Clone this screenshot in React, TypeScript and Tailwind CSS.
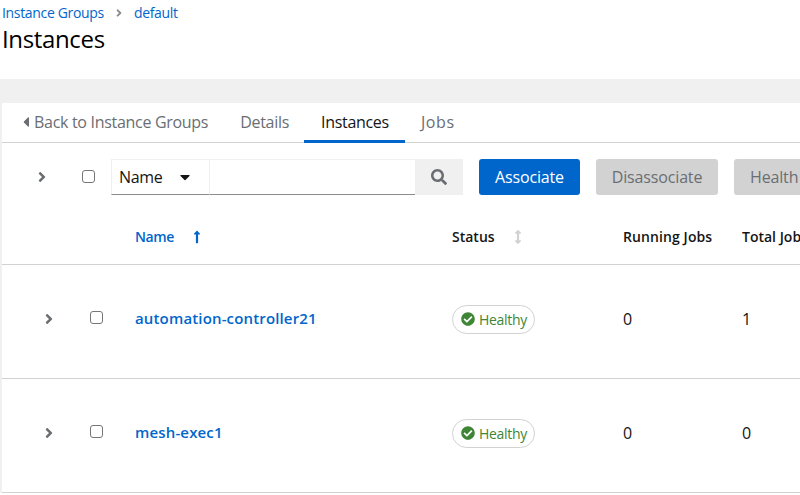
import React from 'react';
import {
  FaAngleRight,
  FaArrowsAltV,
  FaCaretDown,
  FaCaretLeft,
  FaCheckCircle,
  FaLongArrowAltUp,
  FaSearch,
} from 'react-icons/fa';

const FONT = "font-['Open_Sans',sans-serif]";

const Checkbox: React.FC = () => (
  <span className="block w-[13px] h-[13px] rounded-[3px] border border-[#767676] bg-white" />
);

interface RowProps {
  name: string;
  running: number;
  total: number;
}

const Row: React.FC<RowProps> = ({ name, running, total }) => (
  <div className="flex items-center h-[114px] pb-[6px] border-b border-[#d2d2d2]">
    <div className="w-[88px] pl-[42px] shrink-0">
      <FaAngleRight className="w-[10px] h-4 text-[#6a6e73]" />
    </div>
    <div className="w-[45px] shrink-0 -translate-y-px">
      <Checkbox />
    </div>
    <a className="w-[317px] shrink-0 text-[15px] font-semibold text-[#0066cc] tracking-[0.15px]">{name}</a>
    <div className="w-[171px] shrink-0 translate-y-px">
      <span className="inline-flex items-center gap-[4px] h-[29px] w-[83px] pl-2 pb-px rounded-full border border-[#d2d2d2] text-[14px] tracking-[-0.3px] text-[#3e8635]">
        <FaCheckCircle className="w-[14px] h-[14px] text-[#3e8635]" />
        Healthy
      </span>
    </div>
    <div className="w-[119px] shrink-0 text-[16px] text-[#151515]">{running}</div>
    <div className="text-[16px] text-[#151515]">{total}</div>
  </div>
);

export default function App() {
  return (
    <div className={`w-[800px] h-[495px] overflow-hidden bg-white ${FONT} text-[#151515]`}>
      <header className="h-[79px] pl-[2px]">
        <nav className="flex items-center h-[25px] text-[14px] tracking-[-0.33px] text-[#0066cc]">
          <a>Instance Groups</a>
          <FaAngleRight className="w-[8px] h-3 mx-[11px] text-[#8a8d90]" />
          <a>default</a>
        </nav>
        <h1 className="text-[24px] leading-[28px] tracking-[-0.35px] text-black">Instances</h1>
      </header>

      <div className="h-6 bg-[#f0f0f0]" />

      <main className="border-l-2 border-[#f0f0f0]">
        <div className="flex h-10 border-b border-[#d2d2d2] text-[16px] tracking-[-0.3px] text-[#6a6e73]">
          <a className="flex items-center pl-[20px] pr-4 pb-[2px] h-full">
            <FaCaretLeft className="w-[8px] h-4 mr-[4px] text-[#6a6e73]" />
            Back to Instance Groups
          </a>
          <a className="flex items-center px-4 pb-[2px] h-full">Details</a>
          <a className="flex items-center pl-[17px] pr-4 h-[40px] -ml-px border-b-[3px] border-[#0066cc] text-[#151515] pt-px">
            Instances
          </a>
          <a className="flex items-center px-4 pb-[2px] h-full tracking-[0.6px]">Jobs</a>
        </div>

        <div className="flex items-center h-[68px] pb-px">
          <div className="w-[80px] pl-[35px] shrink-0">
            <FaAngleRight className="w-[10px] h-4 text-[#6a6e73]" />
          </div>
          <div className="w-[29px] shrink-0">
            <Checkbox />
          </div>
          <div className="flex h-9 w-[352px] shrink-0 text-[16px]">
            <div className="flex items-center justify-between w-[99px] pl-[7px] pr-[19px] tracking-[-0.3px] border-t border-l border-r border-b border-t-[#f0f0f0] border-l-[#f0f0f0] border-r-[#f0f0f0] border-b-[#8a8d90]">
              Name
              <FaCaretDown className="w-[10px] h-4 text-[#151515]" />
            </div>
            <div className="w-[206px] border-t border-b border-t-[#f0f0f0] border-b-[#8a8d90]" />
            <div className="flex items-center justify-center w-[48px] bg-[#f0f0f0]">
              <FaSearch className="w-4 h-4 text-[#6a6e73]" />
            </div>
          </div>
          <div className="flex gap-4 text-[16px] tracking-[-0.15px] ml-[16px]">
            <button className="w-[101px] h-9 rounded-[3px] bg-[#0066cc] text-white">Associate</button>
            <button className="w-[122px] h-9 rounded-[3px] bg-[#d2d2d2] text-[#6a6e73]">Disassociate</button>
            <button className="w-[120px] h-9 rounded-[3px] bg-[#d2d2d2] text-[#6a6e73] text-left pl-4 whitespace-nowrap">Health Check</button>
          </div>
        </div>

        <div className="flex items-center h-[54px] pb-[2px] border-b border-[#d2d2d2] text-[14px] font-semibold">
          <div className="w-[133px] shrink-0" />
          <div className="flex items-center w-[317px] shrink-0 text-[#0066cc] tracking-[-0.4px]">
            Name
            <FaLongArrowAltUp className="w-[8px] h-[14px] ml-[19px]" />
          </div>
          <div className="flex items-center w-[171px] shrink-0">
            Status
            <FaArrowsAltV className="w-[8px] h-[14px] ml-[19px] text-[#d2d2d2]" />
          </div>
          <div className="w-[119px] shrink-0 tracking-[0.1px]">Running Jobs</div>
          <div className="whitespace-nowrap">Total Jobs</div>
        </div>

        <Row name="automation-controller21" running={0} total={1} />
        <Row name="mesh-exec1" running={0} total={0} />
      </main>
    </div>
  );
}
